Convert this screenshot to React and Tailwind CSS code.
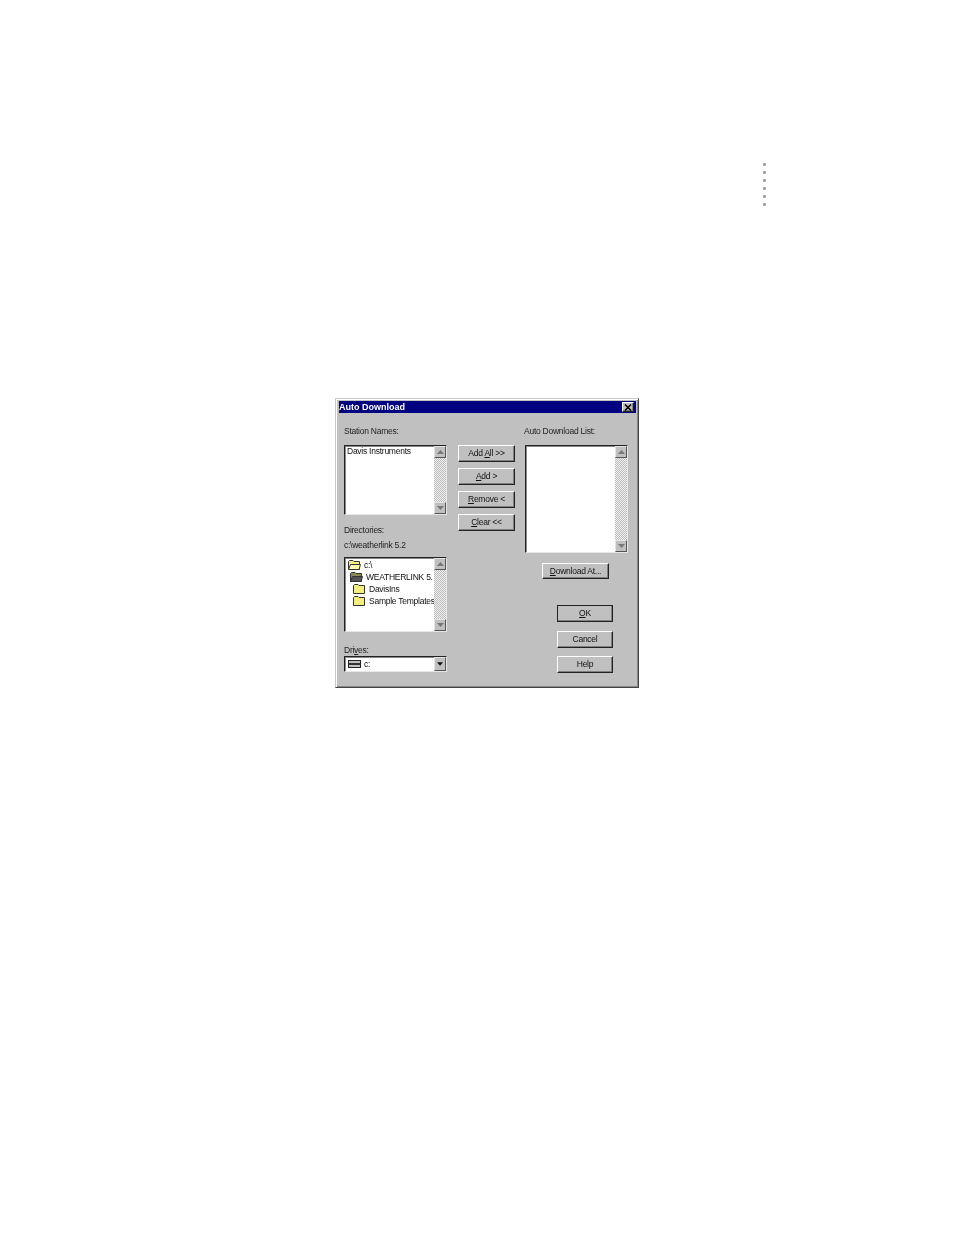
import React from "react";

const raised = "bg-[#c0c0c0] border-t border-l border-t-white border-l-white border-r border-b border-r-[#222] border-b-[#222] shadow-[inset_-1px_-1px_0_#808080]";
const soft = "bg-[#c0c0c0] border-t border-l border-t-[#e4e4e4] border-l-[#e4e4e4] border-r border-b border-r-[#555] border-b-[#555]";
const sunken = "bg-white border border-t-[#222] border-l-[#222] border-r-[#e6e6e6] border-b-[#e6e6e6] shadow-[inset_1px_1px_0_#888]";
const txt = "text-[8.5px] tracking-[-0.25px] leading-none";

function Btn({ w = "w-[57px]", h = "h-[17px]", className = "", children }) {
  return (
    <div className={`${w} ${h} ${raised} flex items-center justify-center ${txt} text-[#111] ${className}`}>
      <span>{children}</span>
    </div>
  );
}

function Arrow({ up, color = "#777", size = 7 }) {
  return (
    <svg width={size} height="4" viewBox="0 0 7 4">
      <path d={up ? "M3.5 0 L7 4 L0 4 Z" : "M0 0 L7 0 L3.5 4 Z"} fill={color} />
    </svg>
  );
}

function ScrollBtn({ up }) {
  return (
    <div className={`w-[12px] h-[12px] shrink-0 ${soft} flex items-center justify-center`}>
      <Arrow up={up} />
    </div>
  );
}

function Scrollbar() {
  return (
    <div className="w-[12px] shrink-0 flex flex-col justify-between bg-[repeating-conic-gradient(#f0f0f0_0_25%,#bcbcbc_0_50%)] bg-[length:2px_2px]">
      <ScrollBtn up />
      <ScrollBtn />
    </div>
  );
}

function ListBox({ w, h, children }) {
  return (
    <div className={`${w} ${h} flex ${sunken}`}>
      <div className="flex-1 min-w-0 overflow-hidden pl-px">{children}</div>
      <Scrollbar />
    </div>
  );
}

function Folder({ open, dark }) {
  return (
    <svg width="13" height="10" viewBox="0 0 13 10" className="shrink-0">
      <path d="M0.5 1.5 L1.5 0.5 L5 0.5 L6 1.5 L11.5 1.5 L11.5 9.5 L0.5 9.5 Z" fill={dark ? "#8a8a50" : "#f4ee80"} stroke="#333" strokeWidth="1" />
      {open && <path d="M0.5 9.5 L2.5 4.5 L12.5 4.5 L11 9.5 Z" fill={dark ? "#555" : "#fff9b0"} stroke="#333" strokeWidth="1" />}
    </svg>
  );
}

function TreeRow({ pl, open, dark, children }) {
  return (
    <div className={`h-[12px] flex items-center gap-[3px] ${pl} whitespace-nowrap ${txt} text-[#111]`}>
      <Folder open={open} dark={dark} />
      <span>{children}</span>
    </div>
  );
}

function Label({ className = "", children }) {
  return <div className={`h-[12px] flex items-center ${txt} text-[#222] whitespace-nowrap ${className}`}>{children}</div>;
}

export default function App() {
  return (
    <div className="w-[954px] h-[1235px] bg-white overflow-hidden font-['Liberation_Sans',Arial,sans-serif]">
      <div className="ml-[763px] pt-[163px] flex flex-col gap-[5px] w-[3px]">
        {[0, 1, 2, 3, 4, 5].map((i) => (
          <div key={i} className="w-[3px] h-[3px] rounded-[1px] bg-[#a0a0a0]" />
        ))}
      </div>

      <div className="ml-[335px] mt-[192px] w-[304px] h-[290px] bg-[#c0c0c0] border border-t-[#c8c8c8] border-l-[#c8c8c8] border-r-[#444] border-b-[#444] shadow-[inset_1px_1px_0_#fff,inset_-1px_-1px_0_#888] p-[2px] blur-[0.3px]">
        <div className="h-[12px] ml-px bg-[#000080] flex items-center justify-between pr-[2px]">
          <span className="text-[9px] font-bold leading-none text-white">Auto Download</span>
          <div className={`w-[12px] h-[10px] ${raised} flex items-center justify-center`}>
            <svg width="8" height="7" viewBox="0 0 8 7">
              <path d="M1 0.5 L7 6.5 M7 0.5 L1 6.5" stroke="#000" strokeWidth="1.5" />
            </svg>
          </div>
        </div>

        <div className="flex pl-[6px] pt-[12px]">
          <div className="w-[114px] shrink-0">
            <Label>Station Names:</Label>
            <div className="mt-[8px]">
              <ListBox w="w-[103px]" h="h-[70px]">
                <div className={`pl-[1px] -mt-px ${txt} !leading-[12px] text-[#111] whitespace-nowrap`}>Davis Instruments</div>
              </ListBox>
            </div>
            <Label className="mt-[9px]">Directories:</Label>
            <Label className="mt-[3px]">c:\weatherlink 5.2</Label>
            <div className="mt-[6px]">
              <ListBox w="w-[103px]" h="h-[75px]">
                <div className="pt-[1px]">
                  <TreeRow pl="pl-[2px]" open>c:\</TreeRow>
                  <TreeRow pl="pl-[4px]" open dark>WEATHERLINK 5.</TreeRow>
                  <TreeRow pl="pl-[7px]">DavisIns</TreeRow>
                  <TreeRow pl="pl-[7px]">Sample Templates</TreeRow>
                </div>
              </ListBox>
            </div>
            <Label className="mt-[12px]">Dri<u>v</u>es:</Label>
            <div className={`w-[103px] h-[16px] flex items-center ${sunken}`}>
              <div className="flex-1 flex items-center gap-[3px] pl-[3px]">
                <svg width="13" height="8" viewBox="0 0 13 8">
                  <rect x="0.5" y="0.5" width="12" height="7" fill="#c0c0c0" stroke="#222" />
                  <rect x="1" y="3" width="11" height="2" fill="#333" />
                </svg>
                <span className={`${txt} text-[#111]`}>c:</span>
              </div>
              <div className={`w-[12px] h-[14px] ${soft} flex items-center justify-center`}>
                <Arrow color="#111" size={6} />
              </div>
            </div>
          </div>

          <div className="w-[66px] shrink-0 pt-[20px] flex flex-col gap-[6px]">
            <Btn>Add <u>A</u>ll &gt;&gt;</Btn>
            <Btn><u>A</u>dd &gt;</Btn>
            <Btn><u>R</u>emove &lt;</Btn>
            <Btn><u>C</u>lear &lt;&lt;</Btn>
          </div>

          <div className="flex-1 min-w-0">
            <Label>Auto Download List:</Label>
            <div className="mt-[8px] ml-px">
              <ListBox w="w-[103px]" h="h-[108px]" />
            </div>
            <div className="mt-[10px] ml-[18px]">
              <Btn w="w-[67px]" h="h-[16px]"><u>D</u>ownload At...</Btn>
            </div>
            <div className="mt-[26px] ml-[33px] flex flex-col">
              <Btn w="w-[56px]" className="border-black !border-t-[#222] !border-l-[#222] shadow-[inset_-1px_-1px_0_#808080,inset_1px_1px_0_#fff]"><u>O</u>K</Btn>
              <Btn w="w-[56px]" className="mt-[9px]">Cancel</Btn>
              <Btn w="w-[56px]" className="mt-[8px]">Help</Btn>
            </div>
          </div>
        </div>
      </div>
    </div>
  );
}
